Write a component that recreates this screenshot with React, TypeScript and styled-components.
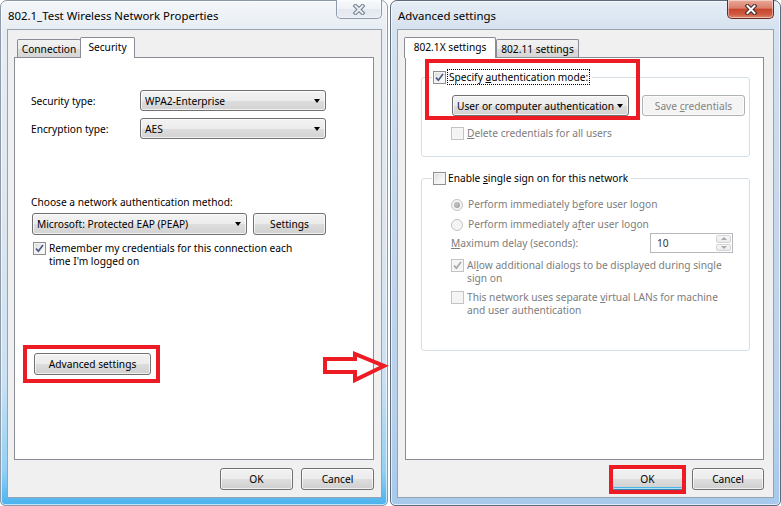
import * as React from "react";
import styled, { createGlobalStyle } from "styled-components";

const GlobalStyle = createGlobalStyle`
  html, body {
    margin: 0;
    padding: 0;
    background: #ffffff;
  }
  body {
    font-family: "Noto Sans", "Liberation Sans", sans-serif;
    font-size: 10.2px;
    color: #000000;
  }
`;

const Stage = styled.div`
  position: relative;
  display: flex;
  gap: 2px;
  width: 781px;
  height: 506px;
  overflow: hidden;
  background: #ffffff;
`;

const Window = styled.section<{ $active?: boolean; $width: number }>`
  display: flex;
  flex-direction: column;
  box-sizing: border-box;
  flex: none;
  width: ${p => p.$width}px;
  height: 100%;
  padding: 0 ${p => (p.$active ? 6 : 5)}px 7px 6px;
  border: 1px solid ${p => (p.$active ? "#5d6c7e" : "#8e9aa7")};
  border-radius: 7px 7px 5px 5px;
  background: ${p =>
    p.$active
      ? "linear-gradient(180deg, #e6eef6 0px, #d5e2ef 28px, #c6d8eb 200px, #b7d0ea 420px, #a6c9ec 506px)"
      : "linear-gradient(180deg, #f4f7fa 0px, #e7edf3 28px, #dde6ef 220px, #c9e1f4 380px, #92d0f4 470px, #45b1ee 506px)"};
  box-shadow: inset 0 0 0 1px rgba(255, 255, 255, 0.65);
`;

const TitleBar = styled.header`
  display: flex;
  align-items: center;
  height: 28px;
  flex: none;
`;

const TitleText = styled.span`
  padding-left: 1px;
  font-size: 11.4px;
  color: #000000;
  white-space: nowrap;
`;

const CloseButton = styled.div<{ $active?: boolean }>`
  display: flex;
  align-items: center;
  justify-content: center;
  align-self: flex-start;
  box-sizing: border-box;
  width: ${p => (p.$active ? 47 : 46)}px;
  height: 19px;
  margin-top: -1px;
  margin-left: auto;
  border: 1px solid ${p => (p.$active ? "#6a2a20" : "#8d9aab")};
  border-top: none;
  border-radius: 0 0 5px 5px;
  background: ${p =>
    p.$active
      ? "linear-gradient(180deg, #e9a999 0%, #dc7e6b 45%, #c8452d 52%, #cf5a40 80%, #dc8a70 100%)"
      : "linear-gradient(180deg, #f8fafc 0%, #eef2f6 50%, #e3e9ef 52%, #e9eef3 100%)"};
  box-shadow: inset 0 0 0 1px rgba(255, 255, 255, 0.45);
`;

const Client = styled.div<{ $pl: number; $pr: number }>`
  display: flex;
  flex-direction: column;
  flex: 1;
  min-height: 0;
  padding: 7px ${p => p.$pr}px 7px ${p => p.$pl}px;
  border: 1px solid #97a3b1;
  background: #f0f0f0;
`;

const TabStrip = styled.div<{ $pad: number }>`
  display: flex;
  align-items: flex-end;
  height: 20px;
  padding-left: ${p => p.$pad}px;
  flex: none;
`;

const Tab = styled.div<{ $selected?: boolean; $width: number }>`
  position: relative;
  z-index: ${p => (p.$selected ? 2 : 1)};
  display: flex;
  align-items: center;
  justify-content: center;
  box-sizing: border-box;
  width: ${p => p.$width}px;
  height: ${p => (p.$selected ? 21 : 18)}px;
  margin-left: ${p => (p.$selected ? -1 : 0)}px;
  margin-bottom: ${p => (p.$selected ? -1 : 0)}px;
  padding-bottom: ${p => (p.$selected ? 2 : 0)}px;
  border: 1px solid #898c95;
  border-bottom: none;
  border-radius: 2px 2px 0 0;
  background: ${p =>
    p.$selected ? "#ffffff" : "linear-gradient(180deg, #f2f2f2 0%, #ebebeb 50%, #dddddd 51%, #d6d6d6 100%)"};
  white-space: nowrap;
`;

const TabPanel = styled.div`
  position: relative;
  display: flex;
  flex-direction: column;
  flex: 1;
  min-height: 0;
  border: 1px solid #898c95;
  background: #ffffff;
`;

const SecurityPane = styled.div`
  display: flex;
  flex-direction: column;
  align-items: flex-start;
  padding-left: 16px;
`;

const FieldGrid = styled.div`
  display: grid;
  grid-template-columns: 109px 186px;
  row-gap: 7px;
  align-items: center;
  margin-top: 32px;
`;

const Prompt = styled.div`
  margin-top: 57px;
  line-height: 13px;
  white-space: nowrap;
`;

const AuthRow = styled.div`
  display: flex;
  gap: 6px;
  margin: 4px 0 0 1px;
`;

const CheckRow = styled.div<{ $mt?: number; $ml?: number; $gap?: number; $disabled?: boolean }>`
  display: flex;
  align-items: flex-start;
  gap: ${p => p.$gap ?? 3}px;
  margin-top: ${p => p.$mt ?? 0}px;
  margin-left: ${p => p.$ml ?? 0}px;
  line-height: 13px;
  color: ${p => (p.$disabled ? "#7d7d7d" : "#000000")};
  white-space: nowrap;
`;

const Combo = styled.div<{ $width: number; $height?: number }>`
  display: flex;
  align-items: center;
  justify-content: space-between;
  box-sizing: border-box;
  width: ${p => p.$width}px;
  height: ${p => p.$height ?? 21}px;
  padding: 0 5px 0 4px;
  border: 1px solid #707070;
  border-radius: 3px;
  background: linear-gradient(180deg, #f3f3f3 0%, #ececec 50%, #dedede 51%, #d2d2d2 100%);
  box-shadow: inset 0 0 0 1px rgba(255, 255, 255, 0.7);
  white-space: nowrap;

  &::after {
    content: "";
    flex: none;
    border-left: 3.5px solid transparent;
    border-right: 3.5px solid transparent;
    border-top: 4px solid #000000;
  }
`;

const Button = styled.div<{ $width: number; $height?: number; $disabled?: boolean; $default?: boolean; $mt?: number; $ml?: number }>`
  display: flex;
  align-items: center;
  justify-content: center;
  box-sizing: border-box;
  flex: none;
  width: ${p => p.$width}px;
  height: ${p => p.$height ?? 22}px;
  margin-top: ${p => p.$mt ?? 0}px;
  margin-left: ${p => p.$ml ?? 0}px;
  border: 1px solid ${p => (p.$disabled ? "#adb2b5" : p.$default ? "#3c7fb1" : "#707070")};
  border-radius: 3px;
  background: ${p =>
    p.$disabled ? "#f4f4f4" : "linear-gradient(180deg, #f2f2f2 0%, #ebebeb 50%, #dddddd 51%, #cfcfcf 100%)"};
  box-shadow: ${p =>
    p.$default
      ? "inset 0 0 0 1px rgba(255,255,255,0.6), inset 0 -2px 0 #48b6e6"
      : "inset 0 0 0 1px rgba(255,255,255,0.7)"};
  color: ${p => (p.$disabled ? "#838383" : "#000000")};
  white-space: nowrap;
`;

const ButtonRow = styled.div`
  display: flex;
  justify-content: flex-end;
  gap: 8px;
  margin-top: 8px;
  flex: none;
`;

const Box = styled.span<{ $disabled?: boolean }>`
  display: flex;
  align-items: center;
  justify-content: center;
  box-sizing: border-box;
  flex: none;
  width: 13px;
  height: 13px;
  border: 1px solid ${p => (p.$disabled ? "#c3c3c3" : "#8e8f8f")};
  background: ${p =>
    p.$disabled ? "#f4f4f4" : "linear-gradient(135deg, #d8d8d8 0%, #eeeeee 45%, #ffffff 100%)"};
  box-shadow: inset 0 0 0 1px ${p => (p.$disabled ? "#f7f7f7" : "#f4f4f4")};
`;

const Radio = styled.span<{ $checked?: boolean }>`
  display: flex;
  align-items: center;
  justify-content: center;
  box-sizing: border-box;
  flex: none;
  width: 12px;
  height: 12px;
  margin: 1px 1px 0 0;
  border: 1px solid #c3c3c3;
  border-radius: 50%;
  background: #f4f4f4;

  &::after {
    content: "";
    display: ${p => (p.$checked ? "block" : "none")};
    width: 6px;
    height: 6px;
    border-radius: 50%;
    background: radial-gradient(circle at 40% 35%, #c4c4c4 0%, #9a9a9a 100%);
  }
`;

const Key = styled.span`
  text-decoration: underline;
`;

const GroupBox = styled.fieldset<{ $mt: number }>`
  margin: ${p => p.$mt}px 13px 0 15px;
  padding: 0;
  min-width: 0;
  border: 1px solid #d5dfe5;
  border-radius: 3px;
`;

const GroupLegend = styled.legend`
  margin-left: 10px;
  padding: 0 3px 0 1px;
  line-height: 15px;
`;

const LegendInner = styled.span`
  display: flex;
  align-items: center;
  gap: 2px;
  white-space: nowrap;
`;

const FocusText = styled.span`
  padding: 0 1px;
  outline: 1px dotted #000000;
  line-height: 14px;
`;

const GroupBody = styled.div<{ $pad: string }>`
  display: flex;
  flex-direction: column;
  padding: ${p => p.$pad};
`;

const InlineRow = styled.div<{ $mt?: number }>`
  display: flex;
  align-items: center;
  margin-top: ${p => p.$mt ?? 0}px;
  white-space: nowrap;
`;

const DisabledLabel = styled.span`
  color: #7d7d7d;
  line-height: 13px;
`;

const Spin = styled.div`
  display: flex;
  box-sizing: border-box;
  width: 83px;
  height: 20px;
  margin-left: auto;
  border: 1px solid #b5b8bd;
  background: #ffffff;
`;

const SpinValue = styled.span`
  flex: 1;
  padding-left: 6px;
  line-height: 18px;
  color: #333333;
`;

const SpinButtons = styled.div`
  display: flex;
  flex-direction: column;
  gap: 1px;
  width: 15px;
  padding: 1px 1px 1px 0;
`;

const SpinHalf = styled.span<{ $down?: boolean }>`
  display: flex;
  align-items: center;
  justify-content: center;
  flex: 1;
  border: 1px solid #d4d4d4;
  border-radius: 2px;
  background: linear-gradient(180deg, #f7f7f7 0%, #eaeaea 100%);

  &::after {
    content: "";
    border-left: 3px solid transparent;
    border-right: 3px solid transparent;
    ${p => (p.$down ? "border-top: 3px solid #a9a9a9;" : "border-bottom: 3px solid #a9a9a9;")}
  }
`;

const Highlight = styled.div<{ $x: number; $y: number; $w: number; $h: number }>`
  position: absolute;
  z-index: 5;
  left: ${p => p.$x}px;
  top: ${p => p.$y}px;
  width: ${p => p.$w}px;
  height: ${p => p.$h}px;
  box-sizing: border-box;
  border: 4px solid #ed1c24;
  pointer-events: none;
`;

const ArrowMark = styled.svg`
  position: absolute;
  z-index: 6;
  left: 321px;
  top: 349px;
  overflow: visible;
`;

function CloseGlyph({ active }: { active?: boolean }) {
  return (
    <svg width="14" height="11" viewBox="0 0 14 11">
      <path d="M3.5 2 L10.5 9 M10.5 2 L3.5 9" stroke={active ? "#3a2a2a" : "#6f7d8e"} strokeWidth="4" strokeLinecap="square" />
      <path d="M3.5 2 L10.5 9 M10.5 2 L3.5 9" stroke={active ? "#ffffff" : "#e9eef3"} strokeWidth="2" strokeLinecap="square" />
    </svg>
  );
}

function CheckBox({ checked, disabled }: { checked?: boolean; disabled?: boolean }) {
  return (
    <Box $disabled={disabled}>
      {checked && (
        <svg width="11" height="11" viewBox="0 0 11 11">
          <path d="M2 5.6 L4.4 8.2 L9 2" fill="none" stroke={disabled ? "#a6a6a6" : "#4a5d85"} strokeWidth="1.7" />
        </svg>
      )}
    </Box>
  );
}

function Win({
  title,
  active,
  width,
  pl,
  pr,
  children
}: {
  title: string;
  active?: boolean;
  width: number;
  pl: number;
  pr: number;
  children: React.ReactNode;
}) {
  return (
    <Window $active={active} $width={width}>
      <TitleBar>
        <TitleText>{title}</TitleText>
        <CloseButton $active={active}>
          <CloseGlyph active={active} />
        </CloseButton>
      </TitleBar>
      <Client $pl={pl} $pr={pr}>
        {children}
      </Client>
    </Window>
  );
}

export default function App() {
  return (
    <>
      <GlobalStyle />
      <Stage>
        <Win title="802.1_Test Wireless Network Properties" width={388} pl={6} pr={7}>
          <TabStrip $pad={3}>
            <Tab $width={64}>Connection</Tab>
            <Tab $width={55} $selected>
              Security
            </Tab>
          </TabStrip>
          <TabPanel>
            <SecurityPane>
              <FieldGrid>
                <span>Security type:</span>
                <Combo $width={186}>WPA2-Enterprise</Combo>
                <span>Encryption type:</span>
                <Combo $width={186}>AES</Combo>
              </FieldGrid>
              <Prompt>Choose a network authentication method:</Prompt>
              <AuthRow>
                <Combo $width={215} $height={22}>
                  Microsoft: Protected EAP (PEAP)
                </Combo>
                <Button $width={73}>Settings</Button>
              </AuthRow>
              <CheckRow $mt={7} $ml={2}>
                <CheckBox checked />
                <span>
                  Remember my credentials for this connection each
                  <br />
                  time I&apos;m logged on
                </span>
              </CheckRow>
              <Button $width={117} $mt={85} $ml={3}>
                Advanced settings
              </Button>
            </SecurityPane>
          </TabPanel>
          <ButtonRow>
            <Button $width={73}>OK</Button>
            <Button $width={73}>Cancel</Button>
          </ButtonRow>
        </Win>

        <Win title="Advanced settings" active width={391} pl={7} pr={9}>
          <TabStrip $pad={0}>
            <Tab $width={92} $selected>
              802.1X settings
            </Tab>
            <Tab $width={83}>802.11 settings</Tab>
          </TabStrip>
          <TabPanel>
            <GroupBox $mt={12}>
              <GroupLegend>
                <LegendInner>
                  <CheckBox checked />
                  <FocusText>
                    Specify <Key>a</Key>uthentication mode:
                  </FocusText>
                </LegendInner>
              </GroupLegend>
              <GroupBody $pad="11px 4px 16px 30px">
                <InlineRow>
                  <Combo $width={179}>User or computer authentication</Combo>
                  <Button $width={103} $height={21} $ml={13} $disabled>
                    <span>
                      Save <Key>c</Key>redentials
                    </span>
                  </Button>
                </InlineRow>
                <CheckRow $mt={11} $ml={-1} $disabled>
                  <CheckBox disabled />
                  <span>
                    <Key>D</Key>elete credentials for all users
                  </span>
                </CheckRow>
              </GroupBody>
            </GroupBox>

            <GroupBox $mt={14}>
              <GroupLegend>
                <LegendInner>
                  <CheckBox />
                  <span>
                    Enable <Key>s</Key>ingle sign on for this network
                  </span>
                </LegendInner>
              </GroupLegend>
              <GroupBody $pad="12px 16px 33px 29px">
                <CheckRow $gap={4} $disabled>
                  <Radio $checked />
                  <span>
                    Perform immediately b<Key>e</Key>fore user logon
                  </span>
                </CheckRow>
                <CheckRow $mt={7} $gap={4} $disabled>
                  <Radio />
                  <span>
                    Perform immediately a<Key>f</Key>ter user logon
                  </span>
                </CheckRow>
                <InlineRow $mt={2}>
                  <DisabledLabel>
                    <Key>M</Key>aximum delay (seconds):
                  </DisabledLabel>
                  <Spin>
                    <SpinValue>10</SpinValue>
                    <SpinButtons>
                      <SpinHalf />
                      <SpinHalf $down />
                    </SpinButtons>
                  </Spin>
                </InlineRow>
                <CheckRow $mt={6} $disabled>
                  <CheckBox checked disabled />
                  <span>
                    Al<Key>l</Key>ow additional dialogs to be displayed during single
                    <br />
                    sign on
                  </span>
                </CheckRow>
                <CheckRow $mt={6} $disabled>
                  <CheckBox disabled />
                  <span>
                    This network uses separate <Key>v</Key>irtual LANs for machine
                    <br />
                    and user authentication
                  </span>
                </CheckRow>
              </GroupBody>
            </GroupBox>
          </TabPanel>
          <ButtonRow>
            <Button $width={73} $default>
              OK
            </Button>
            <Button $width={72}>Cancel</Button>
          </ButtonRow>
        </Win>

        <Highlight $x={23} $y={345} $w={137} $h={38} />
        <Highlight $x={425} $y={59} $w={215} $h={61} />
        <Highlight $x={609} $y={465} $w={77} $h={29} />
        <ArrowMark width="68" height="36" viewBox="0 0 68 36">
          <polygon
            points="4,10 34,10 34,5 63,17 34,31 34,23 4,23"
            fill="none"
            stroke="#ed1c24"
            strokeWidth="4"
            strokeLinejoin="miter"
          />
        </ArrowMark>
      </Stage>
    </>
  );
}
